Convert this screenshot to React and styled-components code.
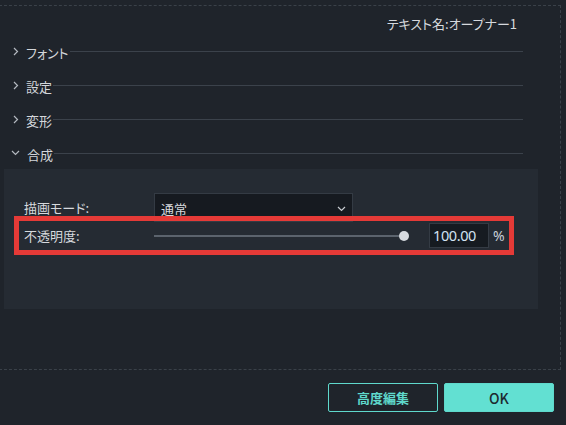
import React from 'react';
import styled, { createGlobalStyle } from 'styled-components';

const GlobalStyle = createGlobalStyle`
    html, body {
        margin: 0;
        padding: 0;
        background: #1f242b;
    }
    body {
        width: 566px;
        height: 425px;
        overflow: hidden;
        font-family: "Noto Sans CJK JP", "Noto Sans", sans-serif;
        font-size: 13px;
        color: #d3d6da;
    }
`;

const Frame = styled.div`
    margin: 5px 0 0 -1px;
    width: 562px;
    height: 365px;
    box-sizing: border-box;
    border: 1px dashed #3a4149;
`;

const TitleRow = styled.div`
    padding: 8px 43px 0 0;
    height: 20px;
    line-height: 20px;
    text-align: right;
    font-feature-settings: "palt";
    color: #d6d9dd;
`;

const SectionHeader = styled.div`
    display: flex;
    align-items: center;
    height: 34px;
    padding-left: ${props => (props.open ? '11px' : '13px')};
    padding-right: 37px;
    cursor: pointer;
`;

const SectionLabel = styled.span`
    margin: 4px 1px 0 7px;
    line-height: 16px;
    font-feature-settings: "palt";
    color: #d3d6da;
`;

const SectionLine = styled.div`
    flex: 1;
    height: 1px;
    background: #3b424b;
`;

const Panel = styled.div`
    margin: -1px 22px 0 4px;
    height: 140px;
    box-sizing: border-box;
    padding: 24px 0 0 20px;
    background: #252b33;
`;

const Row = styled.div`
    position: relative;
    display: inline-flex;
    align-items: center;
    height: ${props => props.h}px;
    margin-top: ${props => props.mt || 0}px;
`;

const Label = styled.div`
    width: 130px;
    font-feature-settings: "palt";
    color: #d6d9dd;
`;

const Select = styled.div`
    display: flex;
    align-items: center;
    justify-content: space-between;
    width: 199px;
    height: 29px;
    box-sizing: border-box;
    padding: 2px 6px 0 6px;
    background: #161a20;
    border: 1px solid #343b44;
    color: #d6d9dd;
`;

const Slider = styled.div`
    position: relative;
    width: 250px;
    height: 2px;
    background: #5b636d;
`;

const Thumb = styled.div`
    position: absolute;
    right: -5px;
    top: -4px;
    width: 10px;
    height: 10px;
    border-radius: 50%;
    background: #d7dbe0;
`;

const NumberBox = styled.div`
    margin-left: 25px;
    width: 60px;
    height: 25px;
    box-sizing: border-box;
    padding: 0 3px;
    line-height: 23px;
    background: #161b21;
    border: 1px solid #343b44;
    font-family: "Noto Sans", sans-serif;
    font-size: 14.5px;
    letter-spacing: -0.4px;
    color: #d2e3f3;
`;

const Unit = styled.span`
    margin-left: 4px;
    width: 11px;
    font-family: "Noto Sans", sans-serif;
    font-size: 14px;
    color: #c9d0d7;
`;

const Highlight = styled.div`
    position: absolute;
    left: -10px;
    right: -10px;
    top: -7px;
    bottom: -7px;
    border: 5px solid #e53a37;
    pointer-events: none;
`;

const Footer = styled.div`
    display: flex;
    justify-content: flex-end;
    gap: 6px;
    margin-top: 13px;
    padding-right: 12px;
`;

const Button = styled.button`
    width: 110px;
    height: 29px;
    box-sizing: border-box;
    border-radius: 2px;
    border: 1px solid #5fd9cc;
    background: ${props => (props.primary ? '#62e0d2' : 'transparent')};
    color: ${props => (props.primary ? '#1d2a30' : '#5fd9cc')};
    font-family: "Noto Sans CJK JP", "Noto Sans", sans-serif;
    font-size: ${props => (props.primary ? '14px' : '13px')};
    font-weight: ${props => (props.primary ? 500 : 700)};
    cursor: pointer;
`;

const ChevronRight = () => (
    <svg width="6" height="9" viewBox="0 0 6 9">
        <polyline points="1,1 4.5,4.5 1,8" fill="none" stroke="#b4b9c0" strokeWidth="1.2" />
    </svg>
);

const ChevronDown = ({ color = '#b4b9c0' }) => (
    <svg width="9" height="6" viewBox="0 0 9 6">
        <polyline points="1,1 4.5,4.5 8,1" fill="none" stroke={color} strokeWidth="1.2" />
    </svg>
);

const sections = [
    { name: 'フォント', open: false },
    { name: '設定', open: false },
    { name: '変形', open: false },
    { name: '合成', open: true },
];

const App = () => {
    return (
        <>
            <GlobalStyle />
            <Frame>
                <TitleRow>テキスト名:オープナー1</TitleRow>
                {sections.map(s => (
                    <SectionHeader key={s.name} open={s.open}>
                        {s.open ? <ChevronDown /> : <ChevronRight />}
                        <SectionLabel>{s.name}</SectionLabel>
                        <SectionLine />
                    </SectionHeader>
                ))}
                <Panel>
                    <Row h={29}>
                        <Label>描画モード:</Label>
                        <Select>
                            <span>通常</span>
                            <ChevronDown color="#c8ccd1" />
                        </Select>
                    </Row>
                    <br />
                    <Row h={25} mt={1}>
                        <Label>不透明度:</Label>
                        <Slider>
                            <Thumb />
                        </Slider>
                        <NumberBox>100.00</NumberBox>
                        <Unit>%</Unit>
                        <Highlight />
                    </Row>
                </Panel>
            </Frame>
            <Footer>
                <Button>高度編集</Button>
                <Button primary>OK</Button>
            </Footer>
        </>
    );
};

export default App;
